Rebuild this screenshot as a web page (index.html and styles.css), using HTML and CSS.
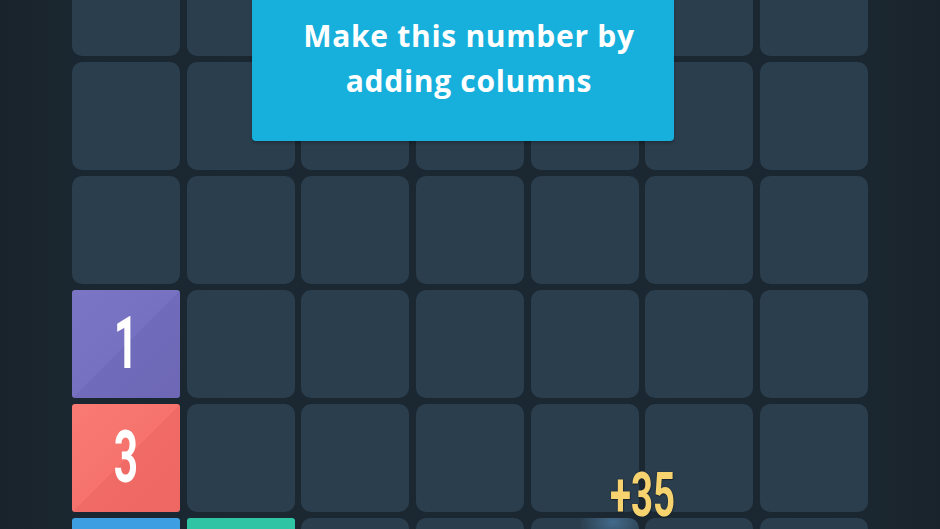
FILE: index.html
```html
<!DOCTYPE html>
<html>
<head>
<meta charset="utf-8">
<link rel="stylesheet" href="styles.css">
</head>
<body>
<div class="screen">
  <div class="board">
    <div class="tile"></div><div class="tile"></div><div class="tile"></div><div class="tile"></div><div class="tile"></div><div class="tile"></div><div class="tile"></div>
    <div class="tile"></div><div class="tile"></div><div class="tile"></div><div class="tile"></div><div class="tile"></div><div class="tile"></div><div class="tile"></div>
    <div class="tile"></div><div class="tile"></div><div class="tile"></div><div class="tile"></div><div class="tile"></div><div class="tile"></div><div class="tile"></div>
    <div class="tile num purple"><span class="digit">1</span></div><div class="tile"></div><div class="tile"></div><div class="tile"></div><div class="tile"></div><div class="tile"></div><div class="tile"></div>
    <div class="tile num red"><span class="digit">3</span></div><div class="tile"></div><div class="tile"></div><div class="tile"></div><div class="tile"></div><div class="tile"></div><div class="tile"></div>
    <div class="tile num blue"></div><div class="tile num teal"></div><div class="tile"></div><div class="tile"></div><div class="tile glow"></div><div class="tile"></div><div class="tile"></div>
  </div>
  <div class="tooltip">
    <p>Make this number by<br>adding columns</p>
  </div>
  <div class="score"><span>+35</span></div>
</div>
</body>
</html>
```
FILE: styles.css
```css
html, body {
  margin: 0;
  padding: 0;
}
body {
  width: 940px;
  height: 529px;
  overflow: hidden;
  background: linear-gradient(90deg, #19232b 0%, #1b2730 8%, #1b2832 50%, #1b2730 92%, #19232b 100%);
  font-family: "Open Sans", "Lato", sans-serif;
}
.screen {
  position: relative;
  width: 940px;
  height: 529px;
  overflow: hidden;
}
.board {
  display: grid;
  grid-template-columns: repeat(7, 108px);
  grid-template-rows: repeat(6, 108px);
  column-gap: 6.67px;
  row-gap: 6px;
  margin: -52px 0 0 72px;
}
.tile {
  background: #2b3e4d;
  border-radius: 10px;
}
.tile.num {
  border-radius: 3px;
  display: flex;
  align-items: center;
  justify-content: center;
}
.purple {
  background: linear-gradient(135deg, #7b75c6 0%, #7771c1 50%, #716bbb 50.5%, #6d67b6 100%);
}
.red {
  background: linear-gradient(135deg, #f97b73 0%, #f6736d 50%, #f16b66 50.5%, #ee6762 100%);
}
.blue {
  background: #3d9fe1;
}
.teal {
  background: #2fc4a3;
}
.glow {
  background: radial-gradient(ellipse 34px 24px at 76% 4%, rgba(90, 150, 200, 0.5), rgba(43, 62, 77, 0) 100%), #2b3e4d;
}
.digit {
  display: inline-block;
  color: #ffffff;
  font-family: "Roboto", "DejaVu Sans", sans-serif;
  font-weight: 700;
  font-size: 73px;
  line-height: 1;
  transform: scaleX(0.58);
  margin-top: -2px;
}
.tooltip {
  position: absolute;
  left: 252px;
  top: -4px;
  width: 422px;
  height: 145px;
  box-sizing: border-box;
  padding-left: 12px;
  background: #17afdc;
  border-radius: 4px;
  box-shadow: 0 2px 3px rgba(0, 0, 0, 0.25);
  display: flex;
  align-items: flex-start;
  justify-content: center;
}
.tooltip p {
  margin: 17px 0 0 0;
  color: #ffffff;
  font-weight: 700;
  font-size: 30px;
  line-height: 45px;
  text-align: center;
  letter-spacing: 0.7px;
}
.score {
  position: absolute;
  left: 572px;
  top: 458px;
  width: 140px;
  display: flex;
  justify-content: center;
}
.score span {
  display: inline-block;
  color: #f7d36f;
  font-family: "Roboto", "DejaVu Sans", sans-serif;
  font-weight: 700;
  font-size: 62px;
  line-height: 1.2;
  transform: scaleX(0.62);
  text-shadow: 0 0 2px #1a2530, 1px 1px 1px #1a2530;
}
```
